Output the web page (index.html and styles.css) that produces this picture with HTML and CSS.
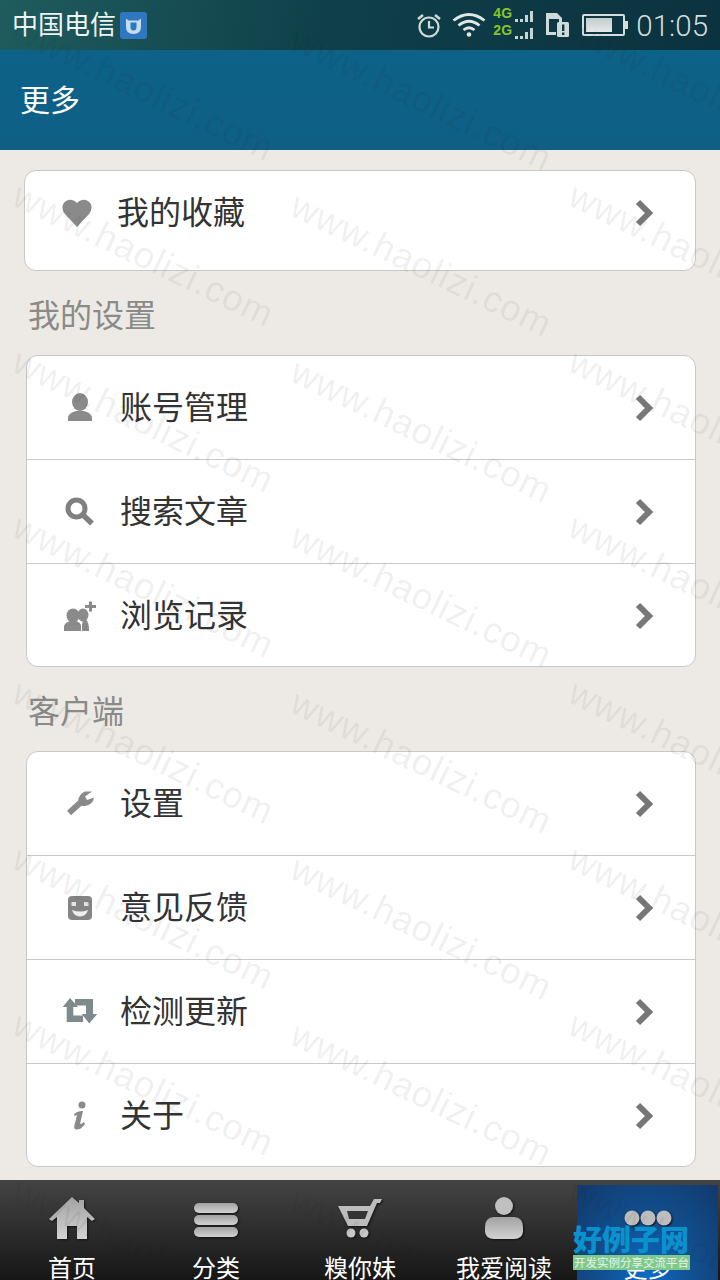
FILE: index.html
```html
<!DOCTYPE html>
<html lang="zh">
<head>
<meta charset="utf-8">
<title>更多</title>
<link rel="stylesheet" href="styles.css">
</head>
<body>
<div class="screen">
  <div class="status">
    <span class="carrier">中国电信</span>
    <svg class="app-badge" width="27" height="27" viewBox="0 0 27 27"><rect width="27" height="27" rx="3" fill="#2f78c0"/><path d="M6 6.500L8.500 8.500H18.500L21 6.500V15Q21 22 13.500 22Q6 22 6 15Z" fill="#c4dced"/><path d="M10.500 10.500H16.500V15Q16.500 18.500 13.500 18.500Q10.500 18.500 10.500 15Z" fill="#2f78c0"/></svg>
    <div class="status-right">
      <svg class="alarm" width="26" height="26" viewBox="0 0 26 26" fill="none" stroke="#cfdad9" stroke-width="2.200"><circle cx="13" cy="15" r="9.500"/><path d="M13 9V15.500H18"/><path d="M2 7L7 3M24 7L19 3" stroke-width="2.600"/></svg>
      <svg class="wifi" width="34" height="26" viewBox="0 0 34 26" fill="none" stroke="#dfe6e6" stroke-width="2.800"><path d="M1.500 8.500Q17 -3.500 32.500 8.500"/><path d="M6.500 13.500Q17 5 27.500 13.500"/><path d="M11.500 18Q17 13.500 22.500 18"/><circle cx="17" cy="22.500" r="2.300" fill="#dfe6e6" stroke="none"/></svg>
      <div class="signal">
        <div class="signal-row"><span class="net">4G</span><span class="bars"><i class="b1"></i><i class="b1"></i><i class="b2"></i><i class="b3"></i></span></div>
        <div class="signal-row"><span class="net">2G</span><span class="bars"><i class="b1"></i><i class="b1"></i><i class="b2"></i><i class="b3"></i></span></div>
      </div>
      <svg class="sim" width="24" height="26" viewBox="0 0 24 26"><path d="M1 1H12L17 6V11H14V7H4V20H11V23H1Z" fill="#cfdad9"/><rect x="12" y="10" width="12" height="15" rx="1.500" fill="#cfdad9"/><rect x="17" y="12.500" width="2.400" height="6.500" fill="#0d3a44"/><rect x="17" y="20.500" width="2.400" height="2.500" fill="#0d3a44"/></svg>
      <div class="battery"><div class="battery-fill"></div></div>
      <span class="time">01:05</span>
    </div>
  </div>

  <header class="title-bar"><h1 class="title">更多</h1></header>

  <main class="content">
    <section class="card card-first">
      <div class="row row-first">
        <svg class="icon" width="32" height="32" viewBox="0 0 32 32"><path d="M16 30L3.500 16.500Q0 11 2.500 6.500Q6 2 11 3Q14 3.500 16 6Q18 3.500 21 3Q26 2 29.500 6.500Q32 11 28.500 16.500Z" fill="#8a8a8a"/></svg>
        <span class="row-text">我的收藏</span>
        <svg class="chevron" width="22" height="28" viewBox="0 0 22 28"><path d="M3 3L14 14L3 25" fill="none" stroke="#777" stroke-width="6"/></svg>
      </div>
    </section>

    <h2 class="section-label">我的设置</h2>
    <section class="card">
      <div class="row">
        <svg class="icon" width="32" height="32" viewBox="0 0 32 32"><ellipse cx="16" cy="10" rx="8" ry="9" fill="#8a8a8a"/><path d="M4 29V25Q5 21 12 19H20Q27 21 28 25V29Z" fill="#8a8a8a"/></svg>
        <span class="row-text">账号管理</span>
        <svg class="chevron" width="22" height="28" viewBox="0 0 22 28"><path d="M3 3L14 14L3 25" fill="none" stroke="#777" stroke-width="6"/></svg>
      </div>
      <div class="row">
        <svg class="icon" width="32" height="32" viewBox="0 0 32 32"><circle cx="12.500" cy="12.500" r="8.500" fill="none" stroke="#808080" stroke-width="5"/><path d="M19 19L28 27.500" stroke="#808080" stroke-width="5.500" fill="none"/></svg>
        <span class="row-text">搜索文章</span>
        <svg class="chevron" width="22" height="28" viewBox="0 0 22 28"><path d="M3 3L14 14L3 25" fill="none" stroke="#777" stroke-width="6"/></svg>
      </div>
      <div class="row">
        <svg class="icon" width="32" height="32" viewBox="0 0 32 32"><path d="M25 1.500H28V5H32V8H28V11.500H25V8H21V5H25Z" fill="#8a8a8a"/><ellipse cx="19" cy="15" rx="5.500" ry="6.500" fill="#8a8a8a"/><path d="M18 31V25L19 20H22Q25 22 25 31Z" fill="#8a8a8a"/><ellipse cx="9" cy="15.500" rx="6.500" ry="7" fill="#8a8a8a"/><path d="M0 31V26Q1 22.500 6 21H12Q17 22.500 17 26V31Z" fill="#8a8a8a"/></svg>
        <span class="row-text">浏览记录</span>
        <svg class="chevron" width="22" height="28" viewBox="0 0 22 28"><path d="M3 3L14 14L3 25" fill="none" stroke="#777" stroke-width="6"/></svg>
      </div>
    </section>

    <h2 class="section-label">客户端</h2>
    <section class="card">
      <div class="row">
        <svg class="icon" width="32" height="32" viewBox="0 0 32 32"><path d="M5 25L16 15" stroke="#8a8a8a" stroke-width="6" fill="none"/><path d="M14 13Q15 6 21 3.500L28 3.500L21 8.500L23 12L30 9.500Q29 17 21 18L16 18Z" fill="#8a8a8a"/></svg>
        <span class="row-text">设置</span>
        <svg class="chevron" width="22" height="28" viewBox="0 0 22 28"><path d="M3 3L14 14L3 25" fill="none" stroke="#777" stroke-width="6"/></svg>
      </div>
      <div class="row">
        <svg class="icon" width="32" height="32" viewBox="0 0 32 32"><rect x="4" y="4" width="24" height="24" rx="4" fill="#858585"/><rect x="7.500" y="10" width="4.500" height="4" fill="#e4e4e4"/><rect x="20" y="10" width="4.500" height="4" fill="#e4e4e4"/><path d="M8 18Q16 21 24 18Q22 24.500 16 24.500Q10 24.500 8 18Z" fill="#eee"/></svg>
        <span class="row-text">意见反馈</span>
        <svg class="chevron" width="22" height="28" viewBox="0 0 22 28"><path d="M3 3L14 14L3 25" fill="none" stroke="#777" stroke-width="6"/></svg>
      </div>
      <div class="row">
        <svg class="icon icon-wide" width="36" height="32" viewBox="0 0 36 32"><path d="M8 2L16 11H11.300V19.500H21V26H4.700V11H0.700Z" fill="#7f8a8c"/><path d="M13 3H31V18H35.300L27.300 27.500L19.700 18H24V9.500H13Z" fill="#7f8a8c"/></svg>
        <span class="row-text">检测更新</span>
        <svg class="chevron" width="22" height="28" viewBox="0 0 22 28"><path d="M3 3L14 14L3 25" fill="none" stroke="#777" stroke-width="6"/></svg>
      </div>
      <div class="row">
        <svg class="icon" width="32" height="32" viewBox="0 0 32 32"><circle cx="18" cy="5" r="3.500" fill="#8a8a8a"/><path d="M10 14Q14 10.500 19 11L16 24Q18 24 20 22L21 24Q17 30 12 29.500Q9.500 29 10.500 25L13 15L10.500 16Z" fill="#8a8a8a"/></svg>
        <span class="row-text">关于</span>
        <svg class="chevron" width="22" height="28" viewBox="0 0 22 28"><path d="M3 3L14 14L3 25" fill="none" stroke="#777" stroke-width="6"/></svg>
      </div>
    </section>
  </main>

  <nav class="tabbar">
    <div class="tab">
      <svg class="tab-icon" width="48" height="48" viewBox="0 0 48 48"><defs><linearGradient id="tabgrad" x1="0" y1="0" x2="0" y2="1"><stop offset="0" stop-color="#a2a2a2"/><stop offset="1" stop-color="#d2d2d2"/></linearGradient></defs><path d="M24 3L31 9V6H36V14L47 25L44 27L39 23V45H29V32H19V45H9V23L4 27L1 25Z" fill="url(#tabgrad)"/></svg>
      <span class="tab-label">首页</span>
    </div>
    <div class="tab">
      <svg class="tab-icon" width="48" height="48" viewBox="0 0 48 48"><rect x="2" y="9" width="44" height="10" rx="5" fill="url(#tabgrad)"/><rect x="2" y="21" width="44" height="10" rx="5" fill="url(#tabgrad)"/><rect x="2" y="33" width="44" height="10" rx="5" fill="url(#tabgrad)"/></svg>
      <span class="tab-label">分类</span>
    </div>
    <div class="tab">
      <svg class="tab-icon" width="48" height="48" viewBox="0 0 48 48"><path d="M2 12H34L38 5H46L44 9H41L31 32H12L6 20Z" fill="#bdbdbd"/><path d="M11 17L13 25H29L32 17Z" fill="#333"/><circle cx="15" cy="39" r="4.500" fill="#c8c8c8"/><circle cx="28" cy="39" r="4.500" fill="#c8c8c8"/></svg>
      <span class="tab-label">糗你妹</span>
    </div>
    <div class="tab">
      <svg class="tab-icon" width="48" height="48" viewBox="0 0 48 48"><circle cx="24" cy="12" r="9" fill="#c0c0c0"/><path d="M13 23H35Q43 24 43 33V38Q42 45 34 45H14Q6 45 5 38V33Q5 24 13 23Z" fill="url(#tabgrad)"/></svg>
      <span class="tab-label">我爱阅读</span>
    </div>
    <div class="tab tab-active">
      <svg class="tab-icon" width="56" height="48" viewBox="0 0 56 48"><circle cx="12" cy="24" r="7.500" fill="#bdbdbd"/><circle cx="28" cy="24" r="7.500" fill="#bdbdbd"/><circle cx="44" cy="24" r="7.500" fill="#bdbdbd"/></svg>
      <span class="tab-label">更多</span>
    </div>
  </nav>

  <div class="watermarks" aria-hidden="true">
    <span class="wm">www.haolizi.com</span><span class="wm">www.haolizi.com</span><span class="wm">www.haolizi.com</span>
    <span class="wm">www.haolizi.com</span><span class="wm">www.haolizi.com</span><span class="wm">www.haolizi.com</span>
    <span class="wm">www.haolizi.com</span><span class="wm">www.haolizi.com</span><span class="wm">www.haolizi.com</span>
    <span class="wm">www.haolizi.com</span><span class="wm">www.haolizi.com</span><span class="wm">www.haolizi.com</span>
    <span class="wm">www.haolizi.com</span><span class="wm">www.haolizi.com</span><span class="wm">www.haolizi.com</span>
    <span class="wm">www.haolizi.com</span><span class="wm">www.haolizi.com</span><span class="wm">www.haolizi.com</span>
    <span class="wm">www.haolizi.com</span><span class="wm">www.haolizi.com</span><span class="wm">www.haolizi.com</span>
    <span class="wm">www.haolizi.com</span><span class="wm">www.haolizi.com</span><span class="wm">www.haolizi.com</span>
  </div>

  <div class="site-logo">
    <div class="site-name">好例子网</div>
    <div class="site-sub">开发实例分享交流平台</div>
  </div>
</div>
</body>
</html>
```

FILE: styles.css
```css
* { box-sizing: border-box; }
html, body { margin: 0; padding: 0; }
body { font-family: "Noto Sans CJK SC", "Noto Sans", sans-serif; background: #edeae5; }

.screen { position: relative; width: 720px; height: 1280px; overflow: hidden; background: #edeae5; }

/* status bar */
.status { height: 50px; display: flex; align-items: center; padding-left: 12px; color: #eef3f3; background: linear-gradient(100deg, #1f5c5e 0%, #0f4049 45%, #0b323f 100%); }
.carrier { font-size: 26px; line-height: 46px; padding-bottom: 4px; }
.app-badge { margin-left: 4px; }
.status-right { margin-left: auto; display: flex; align-items: center; padding-right: 12px; }
.alarm { margin-right: 10px; }
.wifi { margin-right: 7px; }
.signal { width: 40px; display: flex; flex-direction: column; margin-right: 12px; margin-bottom: 4px; }
.signal-row { display: flex; align-items: flex-end; height: 17px; }
.net { align-self: flex-start; font: bold 14px/14px "Liberation Sans", sans-serif; color: #86c62a; }
.bars { display: flex; align-items: flex-end; gap: 2px; margin-left: auto; margin-bottom: 1px; }
.bars i { display: block; width: 3px; background: #c9d3d3; }
.bars .b1 { height: 3px; }
.bars .b2 { height: 7px; }
.bars .b3 { height: 11px; }
.sim { margin-right: 13px; }
.battery { position: relative; width: 43px; height: 22px; border: 2px solid #d5dddd; border-radius: 2px; margin-right: 11px; padding: 2px; }
.battery::after { content: ""; position: absolute; right: -5px; top: 5px; width: 3px; height: 8px; background: #d5dddd; }
.battery-fill { width: 26px; height: 100%; background: linear-gradient(180deg, #c4cccc, #e4e8e8); }
.time { font: 300 29.500px/47px Roboto, sans-serif; padding-top: 3px; color: #d5dddd; }

/* title bar */
.title-bar { height: 100px; display: flex; align-items: center; padding: 0 0 4px 20px; background: linear-gradient(180deg, #0d6287 0%, #0f5f85 100%); }
.title { margin: 0; font-size: 30px; font-weight: 400; color: #fff; }

/* content */
.content { height: 1030px; padding: 20px 24px 0 26px; }
.card { background: #fff; border: 1px solid #c8c8c6; border-radius: 12px; }
.card-first { margin-left: -2px; height: 101px; }
.section-label { margin: 0; height: 84px; padding: 17px 0 0 2px; font-size: 32px; line-height: 50px; font-weight: 400; color: #8a8a88; }
.row { height: 104px; display: flex; align-items: center; padding: 0 38px 0 37px; border-bottom: 1px solid #c8c8c6; }
.row:last-child { border-bottom: 0; margin-bottom: -2px; }
.row-first { height: 84px; padding-left: 36px; }
.row-first:last-child { margin-bottom: 0; }
.row-text { margin-left: 24px; padding-bottom: 6px; font-size: 32px; color: #333; }
.icon { flex: none; }
.icon-wide { margin: 0 -2px; }
.chevron { margin-left: auto; flex: none; }

/* tab bar */
.tabbar { height: 100px; display: grid; grid-template-columns: repeat(5, 144px); background: linear-gradient(180deg, #444 0%, #161616 100%); }
.tab { position: relative; display: flex; flex-direction: column; align-items: center; padding-top: 14px; overflow: hidden; }
.tab-icon { flex: none; filter: drop-shadow(1px 1px 1px #111); }
.tab-label { font-size: 24px; line-height: 34px; margin-top: 8px; color: #fff; white-space: nowrap; }
.tab-active { margin: 5px 2px 0 1px; padding-top: 9px; background: radial-gradient(ellipse at 50% 100%, #0a6cc8 0%, #11508f 45%, #11396c 100%); }

/* watermark */
.watermarks { position: absolute; left: 0; top: 0; width: 900px; height: 1400px; display: grid; grid-template-columns: repeat(3, 278px); grid-auto-rows: 165.800px; pointer-events: none; }
.wm { display: block; transform-origin: 0 0; transform: translate(26px, 5px) rotate(25.700deg); font: 36.500px/50px "Liberation Sans", sans-serif; letter-spacing: 1px; color: rgba(30, 30, 30, 0.08); white-space: nowrap; }
.wm:nth-child(3n+2) { transform: translate(26px, 15px) rotate(25.700deg); }

/* site logo overlay */
.site-logo { position: absolute; left: 573px; top: 1222px; width: 117px; }
.site-name { font-size: 29px; line-height: 32px; font-weight: 900; color: #0a92cf; white-space: nowrap; }
.site-sub { margin-top: 1px; height: 15px; background: #7fc98f; color: #e6f4e6; font-size: 11.500px; line-height: 15px; white-space: nowrap; text-align: center; overflow: hidden; }
```
